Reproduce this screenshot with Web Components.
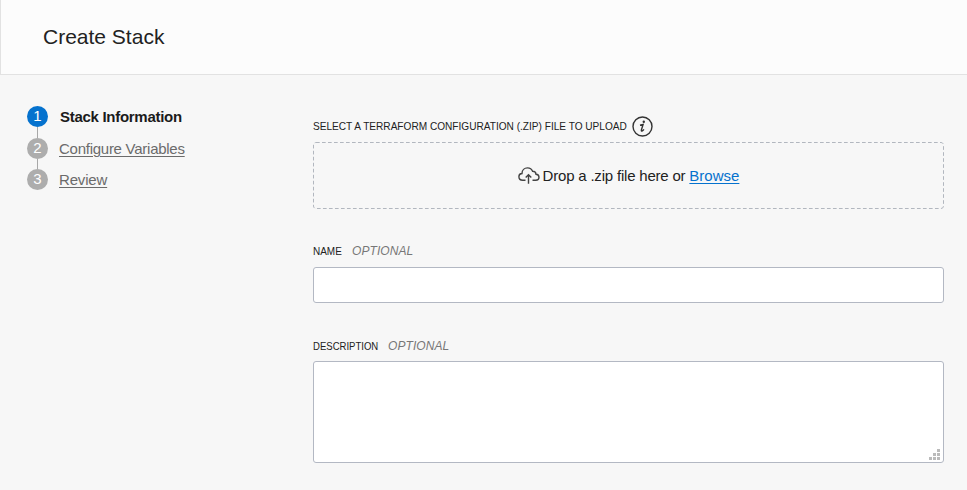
<!DOCTYPE html>
<html lang="en"><head><meta charset="utf-8"><title>Create Stack</title>
<style>html,body{margin:0;height:100%;background:#f7f7f7;overflow:hidden}body{font-family:"Liberation Sans",Arial,sans-serif;color:#222}</style></head>
<body><stack-page></stack-page>
<script>
const define=(name,html,init)=>customElements.define(name,class extends HTMLElement{
  connectedCallback(){
    if(this.shadowRoot)return;
    const t=document.createElement('template');t.innerHTML=html;
    this.attachShadow({mode:'open'}).append(t.content.cloneNode(true));
    if(init)init(this,this.shadowRoot);
  }
});
define('page-header',`<style>:host{display:flex;align-items:center;box-sizing:border-box;height:75px;padding:0 0 1px 42px;background:#fcfcfc;border-left:1px solid #e2e2e2;border-bottom:1px solid #e2e2e2}h1{margin:0;font-size:21px;font-weight:400;line-height:24px}</style><h1><slot></slot></h1>`);
define('wizard-step',`<style>
:host{display:grid;grid-template-columns:21px 1fr;column-gap:11px;height:31.5px;font-size:15px;color:#6b6b6b}
.rail{display:flex;flex-direction:column;align-items:center}
.dot{flex:none;width:21px;height:21px;border-radius:50%;background:#adadad;color:#fff;text-align:center;line-height:20px;font-size:15px}
.line{width:1px;flex:1;background:#a8a8a8}
:host([last]) .line{display:none}
.label{line-height:21px;letter-spacing:-.26px;text-decoration:underline;text-decoration-thickness:1px;text-underline-offset:2px;white-space:nowrap}
:host([last]) .label{letter-spacing:-.17px}
:host([current]) .dot{background:#0572ce}
:host([current]) .label{color:#1b1b1b;font-weight:700;text-decoration:none;padding-left:1px;letter-spacing:-.29px}
</style><div class="rail"><span class="dot"></span><span class="line"></span></div><span class="label"><slot></slot></span>`,(h,r)=>{r.querySelector('.dot').textContent=h.getAttribute('number')});
define('field-label',`<style>:host{display:flex;align-items:center;height:22px;font-size:11px;white-space:nowrap;color:#222}
.text{width:var(--text-width);transform:scaleX(var(--condense,1));transform-origin:left}
i{font-size:12px;color:#777;margin-left:10px;letter-spacing:.08px}</style><span class="text"><slot></slot></span><slot name="after"></slot>`,(h,r)=>{if(h.hasAttribute('optional')){const i=document.createElement('i');i.textContent='OPTIONAL';r.append(i)}});
define('info-icon',`<style>:host{display:block;width:21px;height:21px;margin-left:5px}svg{display:block}</style>
<svg width="21" height="21" viewBox="0 0 21 21" fill="none" stroke="#333"><circle cx="10.5" cy="10.5" r="9.5" stroke-width="1.4"/><path d="M8 9.3l3.1-.8-1.7 5.4q-.3 1.6.9 1 .9-.5 1.6-1.6" stroke-width="1.4"/><circle cx="11.8" cy="5.7" r="1.2" fill="#333" stroke="none"/></svg>`);
define('cloud-icon',`<style>:host{display:block}svg{display:block}</style>
<svg width="22" height="17" viewBox="0 0 22 17" fill="none" stroke="#444" stroke-width="1.4"><path d="M7.5 13.3H4.7C2.5 13.3.9 11.9.9 9.8.9 7.9 2.3 6.6 4 6.5 4 3.3 6.4.9 9.5.9c2.4 0 4.3 1.3 5.1 3.4 2 0 3.3 1.2 3.4 3 1.9.1 3 1.3 3 3 0 1.8-1.4 3-3.2 3h-3.3"/><path d="M10.5 16.8V8M7.7 10.6l2.8-2.8 2.8 2.8"/></svg>`);
define('drop-zone',`<style>:host{position:relative;display:flex;align-items:center;justify-content:center;gap:3px;height:67px;font-size:15px;line-height:20px}
.frame{position:absolute;inset:0;width:100%;height:100%}
a{color:#0572ce;letter-spacing:0;text-decoration:underline;text-decoration-thickness:1px;text-underline-offset:2px}
.text{letter-spacing:-.2px;white-space:nowrap}</style>
<svg class="frame"><rect x=".5" y=".5" width="630" height="66" rx="2.5" fill="none" stroke="#b2b7bf" stroke-dasharray="3.7 2.3"/></svg><cloud-icon></cloud-icon><span class="text"><slot></slot> <a>Browse</a></span>`);
define('text-field',`<style>:host{display:flex;box-sizing:border-box;align-items:flex-end;justify-content:flex-end;height:36px;background:#fff;border:1px solid #b3b8c3;border-radius:3px;padding:2px 3px}
:host([multiline]){height:102px}svg{display:none}:host([multiline]) svg{display:block}</style>
<svg width="11" height="11" fill="#bbb"><path d="M0 8h3v3H0zM4 8h3v3H4zM8 8h3v3H8zM4 4h3v3H4zM8 4h3v3H8zM8 0h3v3H8z"/></svg>`);
define('stack-page',`<style>:host{display:block}
main{display:grid;grid-template-columns:286px 631px;padding-left:27px}
nav{padding-top:31px}form{padding-top:40px}
.file{--text-width:314px;--condense:.918}
.name{--text-width:29px;--condense:.906;margin-top:31px;margin-bottom:5px}
.desc{--text-width:65px;--condense:.868;margin-top:32px;margin-bottom:4px}
drop-zone{margin-top:5px}</style>
<page-header>Create Stack</page-header>
<main><nav><wizard-step number="1" current>Stack Information</wizard-step><wizard-step number="2">Configure Variables</wizard-step><wizard-step number="3" last>Review</wizard-step></nav>
<form><field-label class="file">SELECT A TERRAFORM CONFIGURATION (.ZIP) FILE TO UPLOAD<info-icon slot="after"></info-icon></field-label>
<drop-zone>Drop a .zip file here or</drop-zone>
<field-label class="name" optional>NAME</field-label><text-field></text-field>
<field-label class="desc" optional>DESCRIPTION</field-label><text-field multiline></text-field></form></main>`);
</script></body></html>
